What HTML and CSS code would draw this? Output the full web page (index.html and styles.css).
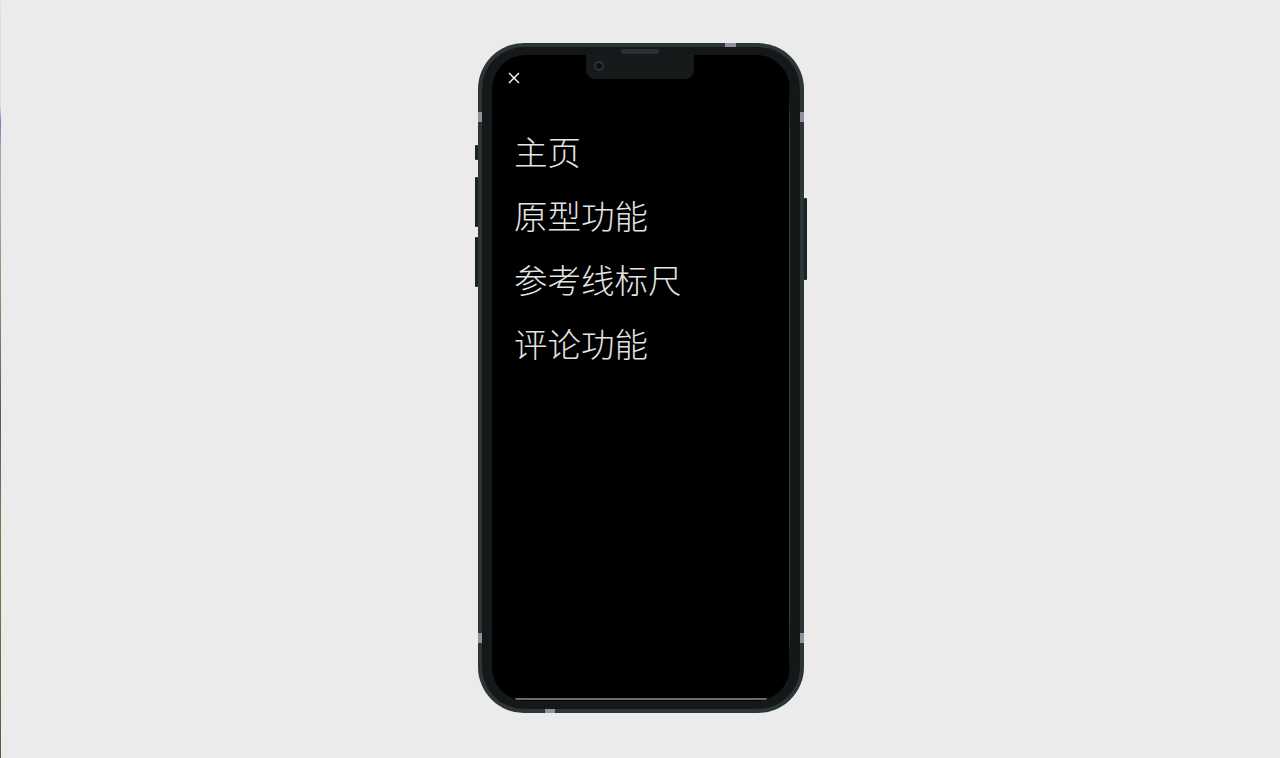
FILE: index.html
```html
<!DOCTYPE html>
<html lang="zh-CN">
<head>
<meta charset="utf-8">
<title>菜单</title>
<link rel="stylesheet" href="styles.css">
</head>
<body>
<div class="edge-strip"></div>
<div class="stage">
  <div class="phone">
    <span class="btn btn-mute"></span>
    <span class="btn btn-vol-up"></span>
    <span class="btn btn-vol-down"></span>
    <span class="btn btn-power"></span>
    <span class="band band-top"></span>
    <span class="band band-bottom"></span>
    <span class="band band-l1"></span>
    <span class="band band-l2"></span>
    <span class="band band-r1"></span>
    <span class="band band-r2"></span>
    <span class="speaker"></span>
    <div class="frame">
      <div class="screen">
        <div class="notch"><span class="camera"></span></div>
        <div class="screen-header">
          <button class="close" aria-label="关闭">
            <svg width="12" height="12" viewBox="0 0 12 12"><path d="M1 1 L11 11 M11 1 L1 11" stroke="#ffffff" stroke-width="1.4" fill="none"/></svg>
          </button>
        </div>
        <ul class="menu">
          <li>主页</li>
          <li>原型功能</li>
          <li>参考线标尺</li>
          <li>评论功能</li>
        </ul>
        <span class="line-right"></span>
        <span class="line-bottom"></span>
      </div>
    </div>
  </div>
</div>
</body>
</html>
```

FILE: styles.css
```css
html, body {
  margin: 0;
  padding: 0;
  height: 100%;
}
body {
  background: #ebebeb;
  font-family: "Noto Sans CJK SC", "Noto Sans", sans-serif;
  position: relative;
  overflow: hidden;
}
.edge-strip {
  position: absolute;
  left: 0;
  top: 0;
  width: 1px;
  height: 758px;
  background: linear-gradient(to bottom, #e0e0e0 0%, #dcdcdc 14%, #6f86b0 16%, #a0a7b8 20%, #b9a89a 25%, #8f8a6e 40%, #4b5b6a 55%, #7d7a52 70%, #6d6a48 85%, #5f5a3c 100%);
}
.stage {
  height: 100%;
  display: flex;
  align-items: center;
  justify-content: center;
  padding-left: 2px;
  box-sizing: border-box;
}
.phone {
  position: relative;
  width: 326px;
  height: 670px;
  box-sizing: border-box;
  padding: 4px;
  background: #2c3437;
  border-radius: 46px;
  margin-bottom: 2px;
}
.frame {
  height: 100%;
  box-sizing: border-box;
  padding: 8px 10px 8px 10px;
  background: #141819;
  border-radius: 42px;
}
.screen {
  position: relative;
  height: 100%;
  background: #000;
  border-radius: 34px;
  overflow: hidden;
}
.btn {
  position: absolute;
  width: 3px;
  background: #1c2224;
  border-radius: 1px;
}
.btn-mute { left: -3px; top: 102px; height: 15px; }
.btn-vol-up { left: -3px; top: 134px; height: 50px; }
.btn-vol-down { left: -3px; top: 194px; height: 50px; }
.btn-power { right: -3px; top: 155px; height: 82px; }
.band {
  position: absolute;
  background: #8e929a;
}
.band-top { top: 0; left: 247px; width: 11px; height: 4px; }
.band-bottom { bottom: 0; left: 67px; width: 10px; height: 4px; }
.band-l1 { left: 0; top: 69px; width: 4px; height: 10px; }
.band-l2 { left: 0; top: 590px; width: 4px; height: 10px; }
.band-r1 { right: 0; top: 69px; width: 4px; height: 10px; }
.band-r2 { right: 0; top: 590px; width: 4px; height: 10px; }
.speaker {
  position: absolute;
  top: 6px;
  left: 143px;
  width: 38px;
  height: 5px;
  border-radius: 3px;
  background: #2a3235;
}
.notch {
  position: absolute;
  top: 0;
  left: 94px;
  width: 108px;
  height: 24px;
  background: #161a1b;
  border-radius: 0 0 9px 9px;
}
.camera {
  position: absolute;
  left: 8px;
  top: 6px;
  width: 6px;
  height: 6px;
  border: 2px solid #2b3335;
  border-radius: 50%;
  background: #0d1011;
}
.screen-header {
  height: 46px;
  display: flex;
  align-items: center;
  padding-left: 16px;
}
.close {
  border: 0;
  background: transparent;
  padding: 0;
  margin: 0;
  width: 12px;
  height: 12px;
  display: block;
  cursor: pointer;
}
.close svg { display: block; }
.menu {
  list-style: none;
  margin: 18px 0 0 0;
  padding: 0 0 0 22px;
}
.menu li {
  color: #e4e4e4;
  font-size: 33.5px;
  font-weight: 300;
  line-height: 64px;
  height: 64px;
  letter-spacing: 0;
}
.line-right {
  position: absolute;
  right: 0;
  top: 26px;
  width: 1px;
  height: 600px;
  background: linear-gradient(to bottom, rgba(80,80,80,0), #3c3c3c 8%, #3c3c3c 90%, rgba(80,80,80,0));
}
.line-bottom {
  position: absolute;
  bottom: 1px;
  left: 23px;
  width: 252px;
  height: 2px;
  background: #6a6a6a;
}
```
